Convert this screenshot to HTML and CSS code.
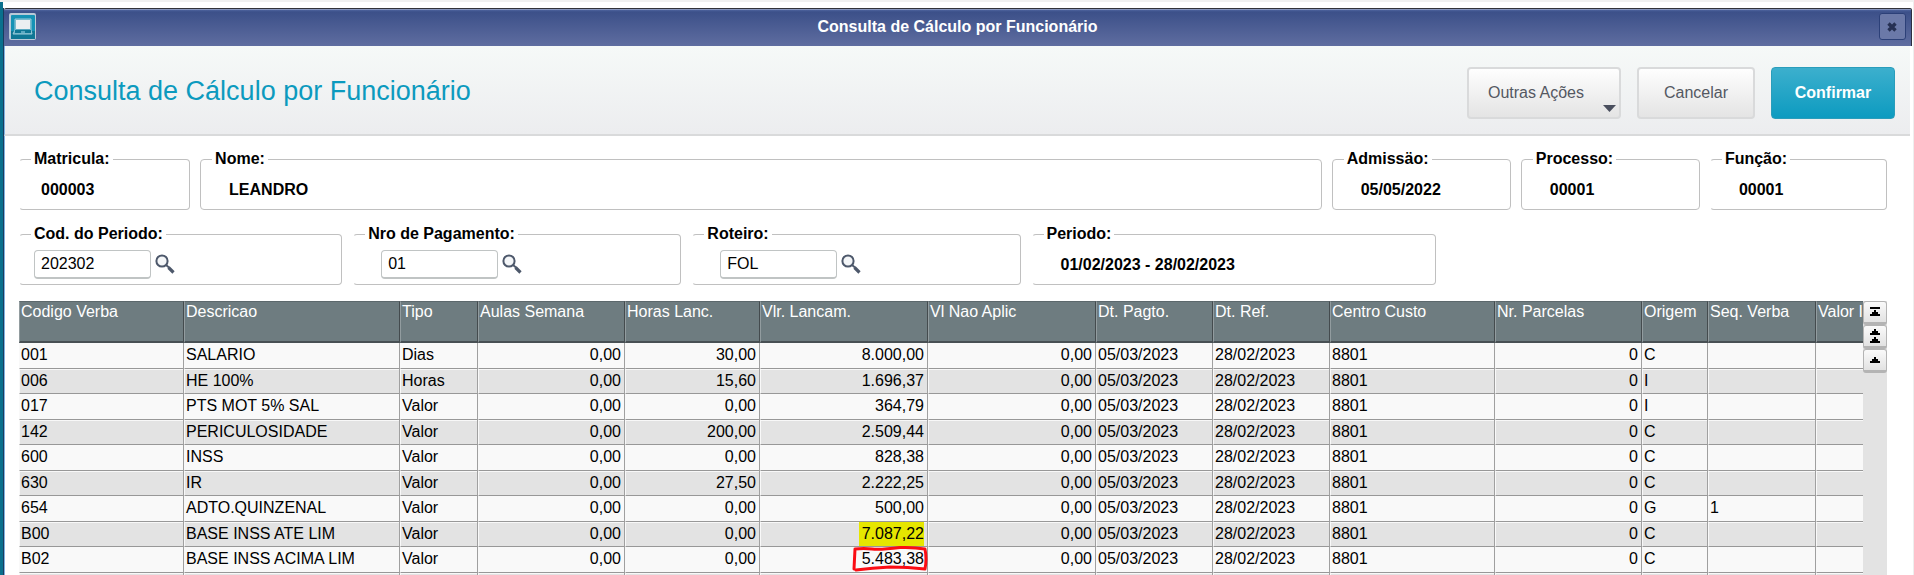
FILE: index.html
```html
<!DOCTYPE html>
<html lang="pt-BR">
<head>
<meta charset="utf-8">
<title>Consulta de Cálculo por Funcionário</title>
<link rel="stylesheet" href="styles.css">
</head>
<body>
<svg class="defs" aria-hidden="true">
  <symbol id="search" viewBox="0 0 20 20">
    <circle cx="7" cy="7" r="5.6" fill="#f4f6f8" stroke="#4d586b" stroke-width="2"/>
    <path d="M11 11l3 2.500" stroke="#4d586b" stroke-width="2"/>
    <path d="M13.500 13.500l5 5" stroke="#4d586b" stroke-width="3.200"/>
  </symbol>
</svg>
<div class="window">
  <div class="titlebar">
    <svg class="app-icon" viewBox="0 0 27 27" aria-hidden="true">
      <rect width="27" height="27" rx="2" fill="#b9c9d8"/>
      <rect x="2" y="2" width="24" height="24" rx="1" fill="#1592b5"/>
      <rect x="2" y="18" width="24" height="8" fill="#0f7795"/>
      <path d="M6 6h16v11l1 4H4l2-4z" fill="#5ba9c1" stroke="#9ccbd9"/>
      <rect x="7" y="7" width="14" height="9" fill="#eceff1"/>
      <rect x="6" y="17" width="16" height="3" fill="#0f7795"/>
      <rect x="12" y="18" width="4" height="2" fill="#5ba9c1"/>
    </svg>
    <span class="titlebar-text">Consulta de Cálculo por Funcionário</span>
    <button class="close" type="button" aria-label="Fechar">
      <svg viewBox="0 0 10 10" width="10" height="10"><path d="M1.500 1.500l7 7M8.500 1.500l-7 7" stroke="#263053" stroke-width="3.400"/></svg>
    </button>
  </div>
  <header class="header">
    <h1>Consulta de Cálculo por Funcionário</h1>
    <div class="actions">
      <button class="btn btn-menu" type="button">Outras Ações
        <svg class="caret" viewBox="0 0 13 7" width="13" height="7"><path d="M0 0h13L6.500 7z" fill="#4a4f5e"/></svg>
      </button>
      <button class="btn btn-cancel" type="button">Cancelar</button>
      <button class="btn btn-primary" type="button">Confirmar</button>
    </div>
  </header>
  <main class="content">
    <div class="fields fields-employee">
      <fieldset class="open"><legend>Matricula:</legend><div class="value value-first">000003</div></fieldset>
      <fieldset><legend>Nome:</legend><div class="value">LEANDRO</div></fieldset>
      <fieldset><legend>Admissäo:</legend><div class="value">05/05/2022</div></fieldset>
      <fieldset><legend>Processo:</legend><div class="value">00001</div></fieldset>
      <fieldset class="open"><legend>Função:</legend><div class="value">00001</div></fieldset>
    </div>
    <div class="fields fields-period">
      <fieldset class="open"><legend><label for="periodo">Cod. do Periodo:</label></legend>
        <div class="lookup lookup-first"><input id="periodo" type="text" value="202302"><button type="button" aria-label="Pesquisar periodo"><svg width="20" height="20"><use href="#search"/></svg></button></div></fieldset>
      <fieldset class="open"><legend><label for="pagamento">Nro de Pagamento:</label></legend>
        <div class="lookup"><input id="pagamento" type="text" value="01"><button type="button" aria-label="Pesquisar pagamento"><svg width="20" height="20"><use href="#search"/></svg></button></div></fieldset>
      <fieldset class="open"><legend><label for="roteiro">Roteiro:</label></legend>
        <div class="lookup"><input id="roteiro" type="text" value="FOL"><button type="button" aria-label="Pesquisar roteiro"><svg width="20" height="20"><use href="#search"/></svg></button></div></fieldset>
      <fieldset class="open"><legend>Periodo:</legend><div class="value">01/02/2023 - 28/02/2023</div></fieldset>
    </div>
    <div class="grid">
      <div class="grid-view">
        <table>
          <colgroup><col class="c-code"><col class="c-desc"><col class="c-type"><col class="c-classes"><col class="c-hours"><col class="c-amount"><col class="c-amount"><col class="c-date"><col class="c-date"><col class="c-center"><col class="c-classes"><col class="c-origin"><col class="c-seq"><col></colgroup>
          <thead><tr><th>Codigo Verba</th><th>Descricao</th><th>Tipo</th><th>Aulas Semana</th><th>Horas Lanc.</th><th>Vlr. Lancam.</th><th>Vl Nao Aplic</th><th>Dt. Pagto.</th><th>Dt. Ref.</th><th>Centro Custo</th><th>Nr. Parcelas</th><th>Origem</th><th>Seq. Verba</th><th>Valor I</th></tr></thead>
          <tbody>
            <tr><td>001</td><td>SALARIO</td><td>Dias</td><td class="n">0,00</td><td class="n">30,00</td><td class="n">8.000,00</td><td class="n">0,00</td><td>05/03/2023</td><td>28/02/2023</td><td>8801</td><td class="n">0</td><td>C</td><td></td><td></td></tr>
            <tr><td>006</td><td>HE 100%</td><td>Horas</td><td class="n">0,00</td><td class="n">15,60</td><td class="n">1.696,37</td><td class="n">0,00</td><td>05/03/2023</td><td>28/02/2023</td><td>8801</td><td class="n">0</td><td>I</td><td></td><td></td></tr>
            <tr><td>017</td><td>PTS MOT 5% SAL</td><td>Valor</td><td class="n">0,00</td><td class="n">0,00</td><td class="n">364,79</td><td class="n">0,00</td><td>05/03/2023</td><td>28/02/2023</td><td>8801</td><td class="n">0</td><td>I</td><td></td><td></td></tr>
            <tr><td>142</td><td>PERICULOSIDADE</td><td>Valor</td><td class="n">0,00</td><td class="n">200,00</td><td class="n">2.509,44</td><td class="n">0,00</td><td>05/03/2023</td><td>28/02/2023</td><td>8801</td><td class="n">0</td><td>C</td><td></td><td></td></tr>
            <tr><td>600</td><td>INSS</td><td>Valor</td><td class="n">0,00</td><td class="n">0,00</td><td class="n">828,38</td><td class="n">0,00</td><td>05/03/2023</td><td>28/02/2023</td><td>8801</td><td class="n">0</td><td>C</td><td></td><td></td></tr>
            <tr><td>630</td><td>IR</td><td>Valor</td><td class="n">0,00</td><td class="n">27,50</td><td class="n">2.222,25</td><td class="n">0,00</td><td>05/03/2023</td><td>28/02/2023</td><td>8801</td><td class="n">0</td><td>C</td><td></td><td></td></tr>
            <tr><td>654</td><td>ADTO.QUINZENAL</td><td>Valor</td><td class="n">0,00</td><td class="n">0,00</td><td class="n">500,00</td><td class="n">0,00</td><td>05/03/2023</td><td>28/02/2023</td><td>8801</td><td class="n">0</td><td>G</td><td>1</td><td></td></tr>
            <tr><td>B00</td><td>BASE INSS ATE LIM</td><td>Valor</td><td class="n">0,00</td><td class="n">0,00</td><td class="n"><mark>7.087,22</mark></td><td class="n">0,00</td><td>05/03/2023</td><td>28/02/2023</td><td>8801</td><td class="n">0</td><td>C</td><td></td><td></td></tr>
            <tr><td>B02</td><td>BASE INSS ACIMA LIM</td><td>Valor</td><td class="n">0,00</td><td class="n">0,00</td><td class="n"><span class="circled">5.483,38<svg class="ink" viewBox="0 0 76 27" width="76" height="27"><path d="M3 4Q12 3 20 4T48 2.500Q62 2 73 4Q75 14 73 24Q56 22 38 22Q20 23 4 25M3 4L2 24" fill="none" stroke="#fb0d14" stroke-width="3" stroke-linecap="round" stroke-linejoin="round"/></svg></span></td><td class="n">0,00</td><td>05/03/2023</td><td>28/02/2023</td><td>8801</td><td class="n">0</td><td>C</td><td></td><td></td></tr>
            <tr><td></td><td></td><td></td><td></td><td></td><td></td><td></td><td></td><td></td><td></td><td></td><td></td><td></td><td></td></tr>
          </tbody>
        </table>
      </div>
      <div class="scroller">
        <button type="button" aria-label="Primeira linha"><svg viewBox="0 0 10 10" width="10" height="10"><path d="M0 0h10v2H0zM4 3h2v2h2v2h2v2H0V7h2V5h2z"/></svg></button>
        <button type="button" aria-label="Página anterior"><svg viewBox="0 0 10 14" width="10" height="14"><path d="M4 0h2v2h2v2h2v2H0V4h2V2h2zM4 8h2v2h2v2h2v2H0v-2h2v-2h2z"/></svg></button>
        <button type="button" aria-label="Linha anterior"><svg viewBox="0 0 10 6" width="10" height="6"><path d="M4 0h2v2h2v2h2v2H0V4h2V2h2z"/></svg></button>
      </div>
    </div>
  </main>
</div>
</body>
</html>
```
FILE: styles.css
```css
* { box-sizing: border-box; }

html { height: 100%; }

body {
  height: 100%;
  margin: 0;
  padding: 6px 1px 0 1px;
  overflow: hidden;
  border-top: 2px solid #f0f0f0;
  border-right: 1px solid #eeeeee;
  background: linear-gradient(90deg, #0a708d 3px, #fff 3px);
  font-family: "Liberation Sans", Arial, sans-serif;
  font-size: 16px;
  line-height: 18px;
  color: #000;
}

button, input { font: inherit; }

.defs { display: none; }

.window {
  height: 100%;
  margin-left: 2px;
  border-left: 1px solid #1b3c5e;
}

.titlebar {
  display: flex;
  align-items: center;
  justify-content: space-between;
  height: 38px;
  padding: 0 5px 2px 5px;
  border-top: 1px solid #33333a;
  border-right: 1px solid #2c2f40;
  border-radius: 2px 2px 0 0;
  background: linear-gradient(#8795bd 1px, #4d629c 1px, #3c5089 3px, #5f6da0);
  color: #fff;
  font-weight: bold;
}

.app-icon { width: 27px; height: 27px; }

.close {
  display: grid;
  place-items: center;
  width: 27px;
  height: 27px;
  padding: 0;
  border: 1px solid #2c4078;
  border-radius: 3px;
  background: #6b79a8;
}

.header {
  display: flex;
  align-items: center;
  justify-content: space-between;
  height: 90px;
  margin-right: 2px;
  padding: 2px 15px 0 29px;
  border-left: 1px solid #7fb2e0;
  border-bottom: 2px solid #d9dadb;
  background: linear-gradient(#f6f9f8, #ecedef);
}

h1 {
  margin: 0;
  color: #0c9abe;
  font-size: 27px;
  line-height: 32px;
  font-weight: normal;
}

.actions { display: flex; gap: 16px; padding-top: 4px; }

.btn {
  position: relative;
  height: 52px;
  padding: 0;
  border: 2px solid #d9dadb;
  border-radius: 4px;
  background: linear-gradient(#fefefe, #e4e4e4);
  color: #545862;
}

.btn-menu { width: 154px; padding-right: 16px; }
.btn-cancel { width: 118px; }
.btn-primary {
  width: 124px;
  border: 1px solid #2a9dbb;
  background: linear-gradient(#3cafcd, #0d9bc0);
  color: #fff;
  font-weight: bold;
}

.caret { position: absolute; right: 3px; bottom: 5px; }

.content {
  height: calc(100% - 128px);
  padding: 14px 25px 0 14px;
  border-left: 1px solid #7fb2e0;
}

.fields { display: grid; height: 60px; }
.fields-employee {
  grid-template-columns: 171fr 1121fr 179fr 179fr 177fr;
  column-gap: 10px;
  margin-bottom: 15px;
}
.fields-period {
  grid-template-columns: 323fr 328fr 328fr 404fr 440fr;
  column-gap: 11px;
  margin-bottom: 16px;
}

fieldset {
  min-width: 0;
  margin: 0;
  padding: 0;
  border: 1px solid #c0c0c0;
  border-radius: 4px;
}
fieldset.open { border-left-color: transparent; }

legend {
  margin-left: 11px;
  padding: 0 3px;
  font-weight: bold;
}

.value { padding: 13px 0 0 28px; font-weight: bold; }
.value-first { padding-left: 21px; }

.lookup { display: flex; gap: 4px; padding: 7px 0 0 27px; }
.lookup-first { padding-left: 14px; }
.lookup input {
  width: 117px;
  height: 29px;
  padding: 0 6px;
  border: 1px solid #c0c4c4;
  border-bottom-width: 2px;
  border-radius: 4px;
  background: #fff;
  color: #000;
}
.lookup button {
  width: 20px;
  height: 20px;
  margin-top: 4px;
  padding: 0;
  border: 0;
  background: none;
}
.lookup svg { display: block; }

.grid { display: flex; height: calc(100% - 151px); overflow: hidden; }
.grid-view { flex: 1; min-width: 0; overflow: hidden; }

table {
  width: 100%;
  table-layout: fixed;
  border-collapse: separate;
  border-spacing: 0;
}

.c-code { width: 165px; }
.c-desc { width: 216px; }
.c-type { width: 78px; }
.c-classes { width: 147px; }
.c-hours { width: 135px; }
.c-amount { width: 168px; }
.c-date { width: 117px; }
.c-center { width: 165px; }
.c-origin { width: 66px; }
.c-seq { width: 108px; }

th, td {
  padding: 0 3px 0 1px;
  vertical-align: top;
  text-align: left;
  white-space: nowrap;
  line-height: 23px;
}

th {
  height: 42px;
  overflow: hidden;
  border-top: 1px solid #5c686c;
  border-bottom: 2px solid #485054;
  border-right: 1px solid #444b4e;
  border-left: 1px solid #929c9f;
  background: #6e7c80;
  color: #fff;
  font-weight: normal;
  line-height: 20px;
}

td {
  height: 26px;
  border-right: 1px solid #a0a0a0;
  border-bottom: 1px solid #989898;
  border-left: 1px solid #f9f9f9;
  background: #f9f9f9;
}
tr:nth-child(even) td {
  height: 25px;
  background: #e3e3e3;
  box-shadow: inset 0 1px #f8f8f8;
}
th:last-child, td:last-child { border-right: 0; padding-right: 0; }
.n { text-align: right; }

mark {
  display: inline-block;
  height: 24px;
  padding-left: 3px;
  background: #e6e600;
  color: #000;
}
.circled { position: relative; }
.ink { position: absolute; right: -4px; top: -5px; }

.scroller {
  display: flex;
  flex-direction: column;
  width: 24px;
  background: #e3e3e3;
}
.scroller button {
  display: grid;
  place-items: center;
  height: 24px;
  padding: 0;
  border: 1px solid #b4b4b4;
  border-bottom-width: 3px;
  border-radius: 3px;
  background: linear-gradient(#fafafa, #e2e2e2);
}
.scroller svg { shape-rendering: crispEdges; }
```
